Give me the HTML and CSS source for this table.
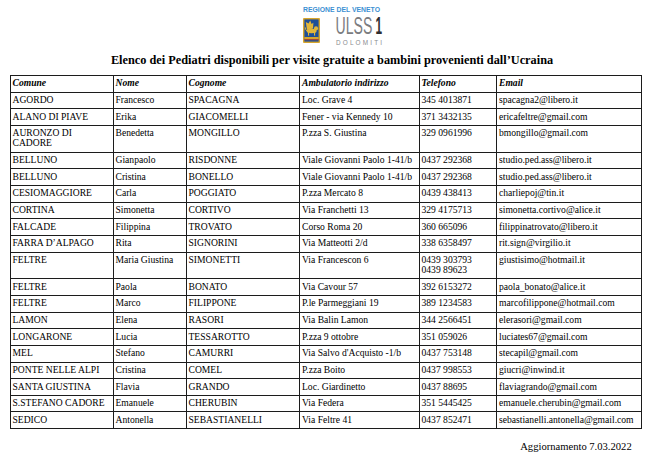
FILE: index.html
```html
<!DOCTYPE html>
<html lang="it">
<head>
<meta charset="utf-8">
<title>Elenco dei Pediatri</title>
<link rel="stylesheet" href="styles.css">
</head>
<body>
<div class="page">
  <header class="brand">
    <svg class="logo" width="84" height="42" viewBox="0 0 84 42" xmlns="http://www.w3.org/2000/svg">
      <text class="logo-region" x="1" y="7" textLength="77" lengthAdjust="spacingAndGlyphs">REGIONE DEL VENETO</text>
      <rect x="1" y="13" width="17" height="25" rx="1" fill="#d8a62c"/>
      <rect x="2.4" y="14.4" width="14.2" height="22.2" fill="#1f4f97"/>
      <path d="M5 25 L3.8 17 L6.5 18.6 L8.2 15.6 L9.6 19 L11.4 17.8 L11 23.5 Z" fill="#e2b63a"/>
      <ellipse cx="9.6" cy="26" rx="5" ry="2.2" fill="#e2b63a"/>
      <circle cx="14" cy="23.4" r="2.1" fill="#e2b63a"/>
      <path d="M5 26 Q3 24.5 3.4 22.4" stroke="#e2b63a" stroke-width="0.9" fill="none"/>
      <rect x="6" y="27" width="1.1" height="3.6" fill="#e2b63a"/>
      <rect x="12" y="27" width="1.1" height="3.6" fill="#e2b63a"/>
      <rect x="2.4" y="32" width="14.2" height="2.2" fill="#d8a62c"/>
      <rect x="2.4" y="34.2" width="14.2" height="1" fill="#b8432c"/>
      <text class="logo-ulss" transform="translate(33.5 29) scale(0.6 1)">ULSS</text>
      <text class="logo-one" transform="translate(73.5 29) scale(0.5 1)">1</text>
      <text class="logo-dolo" x="34" y="39.8" textLength="46" lengthAdjust="spacing">DOLOMITI</text>
    </svg>
  </header>

  <h1 class="title">Elenco dei Pediatri disponibili per visite gratuite a bambini provenienti dall’Ucraina</h1>

  <table class="list">
    <colgroup>
      <col class="col-comune">
      <col class="col-nome">
      <col class="col-cognome">
      <col class="col-amb">
      <col class="col-tel">
      <col class="col-email">
    </colgroup>
    <thead>
      <tr><th>Comune</th><th>Nome</th><th>Cognome</th><th>Ambulatorio indirizzo</th><th>Telefono</th><th>Email</th></tr>
    </thead>
    <tbody>
      <tr><td>AGORDO</td><td>Francesco</td><td>SPACAGNA</td><td>Loc. Grave 4</td><td>345 4013871</td><td>spacagna2@libero.it</td></tr>
      <tr><td>ALANO DI PIAVE</td><td>Erika</td><td>GIACOMELLI</td><td>Fener - via Kennedy 10</td><td>371 3432135</td><td>ericafeltre@gmail.com</td></tr>
      <tr><td>AURONZO DI<br>CADORE</td><td>Benedetta</td><td>MONGILLO</td><td>P.zza S. Giustina</td><td>329 0961996</td><td>bmongillo@gmail.com</td></tr>
      <tr><td>BELLUNO</td><td>Gianpaolo</td><td>RISDONNE</td><td>Viale Giovanni Paolo 1-41/b</td><td>0437 292368</td><td>studio.ped.ass@libero.it</td></tr>
      <tr><td>BELLUNO</td><td>Cristina</td><td>BONELLO</td><td>Viale Giovanni Paolo 1-41/b</td><td>0437 292368</td><td>studio.ped.ass@libero.it</td></tr>
      <tr><td>CESIOMAGGIORE</td><td>Carla</td><td>POGGIATO</td><td>P.zza Mercato 8</td><td>0439 438413</td><td>charliepoj@tin.it</td></tr>
      <tr><td>CORTINA</td><td>Simonetta</td><td>CORTIVO</td><td>Via Franchetti 13</td><td>329 4175713</td><td>simonetta.cortivo@alice.it</td></tr>
      <tr><td>FALCADE</td><td>Filippina</td><td>TROVATO</td><td>Corso Roma 20</td><td>360 665096</td><td>filippinatrovato@libero.it</td></tr>
      <tr><td>FARRA D’ALPAGO</td><td>Rita</td><td>SIGNORINI</td><td>Via Matteotti 2/d</td><td>338 6358497</td><td>rit.sign@virgilio.it</td></tr>
      <tr><td>FELTRE</td><td>Maria Giustina</td><td>SIMONETTI</td><td>Via Francescon 6</td><td>0439 303793<br>0439 89623</td><td>giustisimo@hotmail.it</td></tr>
      <tr><td>FELTRE</td><td>Paola</td><td>BONATO</td><td>Via Cavour 57</td><td>392 6153272</td><td>paola_bonato@alice.it</td></tr>
      <tr><td>FELTRE</td><td>Marco</td><td>FILIPPONE</td><td>P.le Parmeggiani 19</td><td>389 1234583</td><td>marcofilippone@hotmail.com</td></tr>
      <tr><td>LAMON</td><td>Elena</td><td>RASORI</td><td>Via Balin Lamon</td><td>344 2566451</td><td>elerasori@gmail.com</td></tr>
      <tr><td>LONGARONE</td><td>Lucia</td><td>TESSAROTTO</td><td>P.zza 9 ottobre</td><td>351 059026</td><td>luciates67@gmail.com</td></tr>
      <tr><td>MEL</td><td>Stefano</td><td>CAMURRI</td><td>Via Salvo d'Acquisto -1/b</td><td>0437 753148</td><td>stecapil@gmail.com</td></tr>
      <tr><td>PONTE NELLE ALPI</td><td>Cristina</td><td>COMEL</td><td>P.zza Boito</td><td>0437 998553</td><td>giucri@inwind.it</td></tr>
      <tr><td>SANTA GIUSTINA</td><td>Flavia</td><td>GRANDO</td><td>Loc. Giardinetto</td><td>0437 88695</td><td>flaviagrando@gmail.com</td></tr>
      <tr><td>S.STEFANO CADORE</td><td>Emanuele</td><td>CHERUBIN</td><td>Via Federa</td><td>351 5445425</td><td>emanuele.cherubin@gmail.com</td></tr>
      <tr><td>SEDICO</td><td>Antonella</td><td>SEBASTIANELLI</td><td>Via Feltre 41</td><td>0437 852471</td><td>sebastianelli.antonella@gmail.com</td></tr>
    </tbody>
  </table>

  <p class="updated">Aggiornamento 7.03.2022</p>
</div>
</body>
</html>
```

FILE: styles.css
```css
html, body {
  margin: 0;
  padding: 0;
  background: #ffffff;
}

body {
  font-family: "Liberation Serif", "Times New Roman", serif;
  color: #000000;
}

.page {
  width: 650px;
}

.brand {
  height: 52px;
  padding-left: 38px;
  display: flex;
  justify-content: center;
  align-items: flex-start;
}

.logo {
  display: block;
  margin-top: 5px;
}

.logo-region {
  font-family: "Liberation Sans", Arial, sans-serif;
  font-weight: bold;
  font-size: 6.6px;
  fill: #3c90d2;
}

.logo-ulss {
  font-family: "Liberation Sans", Arial, sans-serif;
  font-size: 23.5px;
  fill: #7b7c80;
}

.logo-one {
  font-family: "Liberation Sans", Arial, sans-serif;
  font-weight: bold;
  font-size: 23.5px;
  fill: #2e2e30;
}

.logo-dolo {
  font-family: "Liberation Sans", Arial, sans-serif;
  font-size: 6.4px;
  fill: #8a8b8f;
}

.title {
  margin: 0;
  padding-left: 14px;
  font-size: 12.3px;
  line-height: 16px;
  font-weight: bold;
  text-align: center;
}

.list {
  margin: 7px 0 0 9.5px;
  width: 631px;
  table-layout: fixed;
  border-collapse: collapse;
  font-size: 9.6px;
  line-height: 10px;
}

.col-comune { width: 103px; }
.col-nome { width: 73px; }
.col-cognome { width: 113.5px; }
.col-amb { width: 119.5px; }
.col-tel { width: 77.5px; }
.col-email { width: 144.5px; }

.list th,
.list td {
  border: 1px solid #1c1c1c;
  padding: 2.4px 2px 3.27px 2px;
  text-align: left;
  vertical-align: top;
  white-space: nowrap;
  overflow: hidden;
  font-weight: normal;
}

.list th {
  font-weight: bold;
  font-style: italic;
}

.updated {
  margin: 11.5px 0 0 0;
  padding-right: 18.3px;
  text-align: right;
  font-size: 10.6px;
  line-height: 12px;
}
```
